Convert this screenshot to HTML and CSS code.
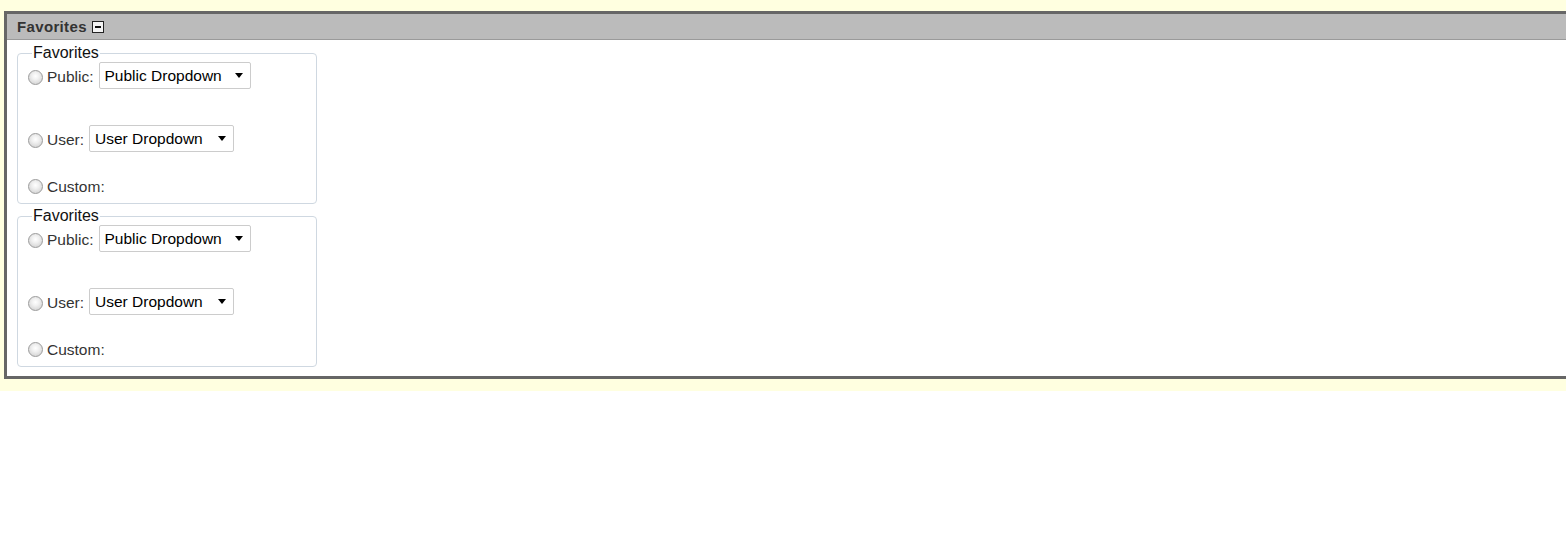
FILE: index.html
```html
<!DOCTYPE html>
<html>
<head>
<meta charset="utf-8">
<title>Favorites</title>
<link rel="stylesheet" href="styles.css">
</head>
<body>
<div class="page">
  <div class="panel">
    <div class="panel-header">
      <span class="panel-title">Favorites</span>
      <span class="toggle"><span class="toggle-bar"></span></span>
    </div>
    <div class="panel-body">
      <fieldset class="fav">
        <legend>Favorites</legend>
        <div class="row row-public">
          <input type="radio" name="fav1" class="radio">
          <span class="lbl">Public:</span>
          <select class="dd dd-public"><option>Public Dropdown</option></select>
        </div>
        <div class="row row-user">
          <input type="radio" name="fav1" class="radio">
          <span class="lbl">User:</span>
          <select class="dd dd-user"><option>User Dropdown</option></select>
        </div>
        <div class="row row-custom">
          <input type="radio" name="fav1" class="radio">
          <span class="lbl">Custom:</span>
        </div>
      </fieldset>
      <fieldset class="fav">
        <legend>Favorites</legend>
        <div class="row row-public">
          <input type="radio" name="fav2" class="radio">
          <span class="lbl">Public:</span>
          <select class="dd dd-public"><option>Public Dropdown</option></select>
        </div>
        <div class="row row-user">
          <input type="radio" name="fav2" class="radio">
          <span class="lbl">User:</span>
          <select class="dd dd-user"><option>User Dropdown</option></select>
        </div>
        <div class="row row-custom">
          <input type="radio" name="fav2" class="radio">
          <span class="lbl">Custom:</span>
        </div>
      </fieldset>
    </div>
  </div>
</div>
</body>
</html>
```

FILE: styles.css
```css
html, body {
  margin: 0;
  padding: 0;
  background: #ffffff;
  overflow: hidden;
  font-family: "Liberation Sans", Arial, sans-serif;
}

.page {
  background: #ffffe0;
  padding: 11px 0 12px 4px;
  overflow: hidden;
}

.panel {
  width: calc(100% + 20px);
  border: 3px solid #666666;
  background: #ffffff;
}

.panel-header {
  display: flex;
  align-items: center;
  height: 25px;
  padding-left: 10px;
  background: #bbbbbb;
  border-bottom: 1px solid #9a9a9a;
}

.panel-title {
  font-size: 15px;
  font-weight: bold;
  color: #333333;
  letter-spacing: 0.35px;
}

.toggle {
  display: flex;
  align-items: center;
  justify-content: center;
  width: 10px;
  height: 10px;
  margin-left: 5px;
  margin-top: 1px;
  border: 1px solid #222222;
  background: #f4f4f4;
}

.toggle-bar {
  width: 6px;
  height: 2px;
  background: #111111;
}

.panel-body {
  padding: 4px 0 9px 10px;
}

.fav {
  width: 280px;
  margin: 0 0 3px 0;
  padding: 0 9px 8px 9px;
  border: 1px solid #cfd8e1;
  border-radius: 4px;
}

.fav:last-child {
  margin-bottom: 0;
}

.fav legend {
  margin-left: 5px;
  padding: 0 1px;
  font-size: 16px;
  line-height: 18px;
  color: #111111;
}

.row {
  display: flex;
  align-items: center;
}

.row-public {
  height: 27px;
}

.row-user {
  height: 27px;
  margin-top: 36px;
}

.row-custom {
  height: 20px;
  margin-top: 23px;
}

.radio {
  -webkit-appearance: none;
  appearance: none;
  width: 15px;
  height: 15px;
  margin: 3px 4px 0 1px;
  border: 1px solid #9b9b9b;
  border-radius: 50%;
  background: radial-gradient(circle at 50% 40%, #ffffff 0%, #f0f0f0 35%, #c9c9c9 100%);
  box-sizing: border-box;
  flex: none;
}

.lbl {
  margin-top: 3px;
  font-size: 15.5px;
  color: #333333;
}

.dd {
  -webkit-appearance: none;
  appearance: none;
  height: 27px;
  margin-left: 5px;
  padding: 0 18px 0 5px;
  border: 1px solid #cccccc;
  border-radius: 2px;
  background: #ffffff url("data:image/svg+xml;utf8,<svg xmlns='http://www.w3.org/2000/svg' width='8' height='5'><polygon points='0,0 8,0 4,5' fill='black'/></svg>") no-repeat right 7px center;
  font-family: "Liberation Sans", Arial, sans-serif;
  font-size: 15.5px;
  color: #000000;
}

.dd-public {
  width: 152px;
}

.dd-user {
  width: 145px;
}
```
